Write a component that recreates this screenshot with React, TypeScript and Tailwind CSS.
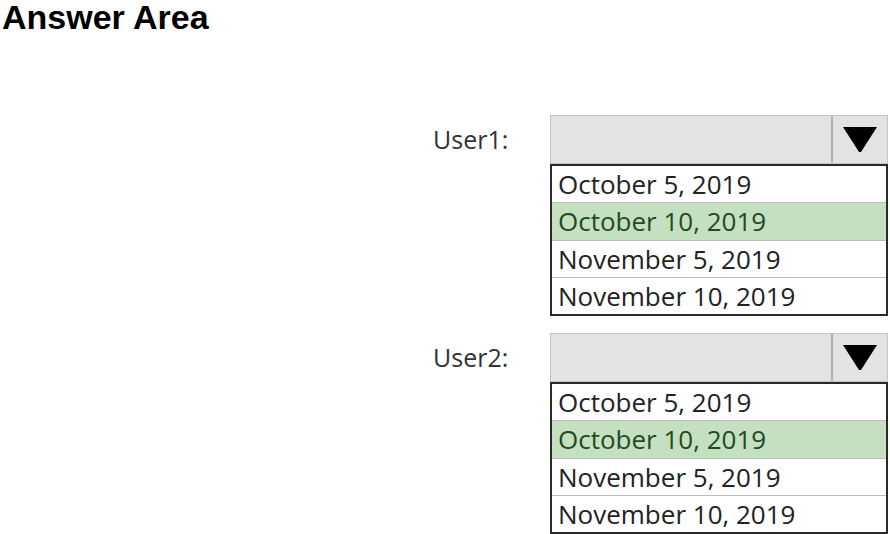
const options = [
  { label: 'October 5, 2019', selected: false },
  { label: 'October 10, 2019', selected: true },
  { label: 'November 5, 2019', selected: false },
  { label: 'November 10, 2019', selected: false },
]

function Dropdown({ user }: { user: string }) {
  return (
    <div className="flex items-start">
      <div className="w-[117px] h-[48px] flex items-center text-[25px] leading-[30px] text-[#333] font-['Open_Sans',sans-serif]">
        {user}:
      </div>
      <div className="w-[338px] flex flex-col">
        <div className="h-[49px] flex bg-[#e3e3e3] border border-[#c4c4c4]">
          <div className="flex-1" />
          <div className="w-[56px] border-l-2 border-[#b0b0b0] flex items-center justify-center">
            <svg width="34" height="25" viewBox="0 0 34 25">
              <polygon points="0,0 34,0 18,25 16,25" fill="#000" />
            </svg>
          </div>
        </div>
        <div className="h-[152px] flex flex-col border-2 border-[#2a2a2a] bg-white font-['Open_Sans',sans-serif] text-[26px] leading-[30px]">
          {options.map((o, i) => (
            <div
              key={o.label}
              className={
                'flex-1 flex items-center pl-[6px] ' +
                (i > 0 ? 'border-t border-[#bdbdbd] ' : '') +
                (o.selected ? 'bg-[#c5e0c0] text-[#1f4a1f]' : 'text-[#222]')
              }
            >
              {o.label}
            </div>
          ))}
        </div>
      </div>
    </div>
  )
}

export default function App() {
  return (
    <div className="w-[890px] h-[534px] bg-white overflow-hidden">
      <h1 className="pl-[2px] text-[34px] leading-[34px] font-bold text-black font-['Liberation_Sans',Arial,sans-serif]">
        Answer Area
      </h1>
      <div className="mt-[81px] ml-[433px] flex flex-col gap-[17px]">
        <Dropdown user="User1" />
        <Dropdown user="User2" />
      </div>
    </div>
  )
}
